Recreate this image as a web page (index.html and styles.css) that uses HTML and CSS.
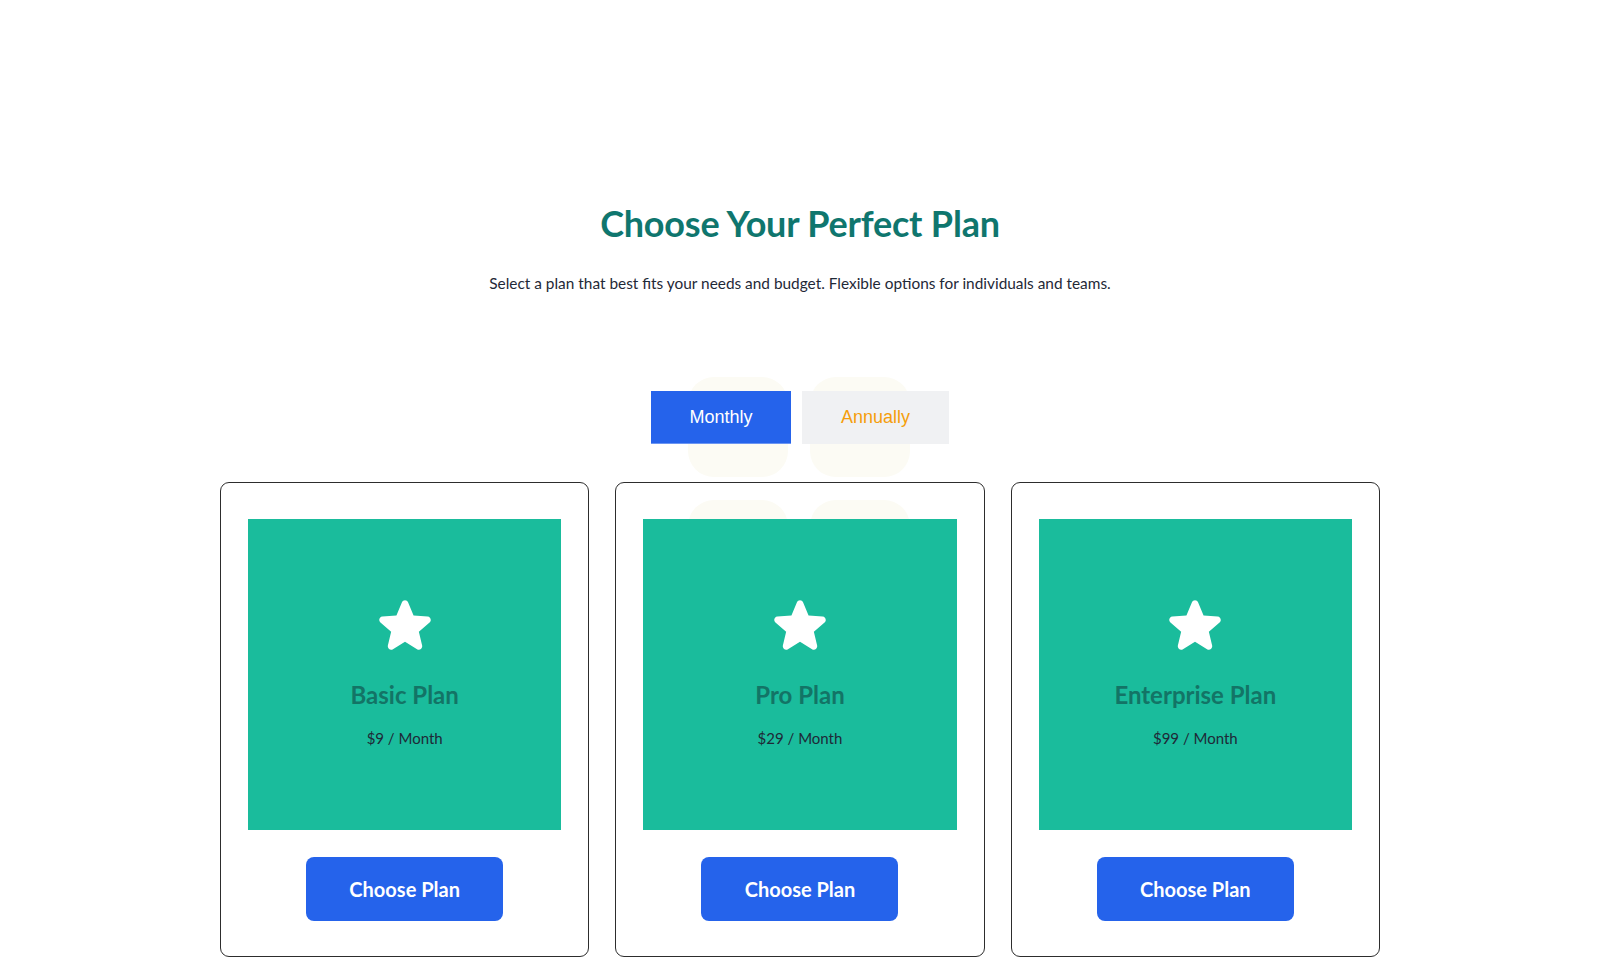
FILE: index.html
```html
<!DOCTYPE html>
<html lang="en">
<head>
<meta charset="utf-8">
<title>Choose Your Perfect Plan</title>
<link rel="stylesheet" href="styles.css">
</head>
<body>
<div class="decor" aria-hidden="true">
  <span class="tile"></span><span class="tile"></span>
  <span class="tile"></span><span class="tile"></span>
</div>
<main class="pricing">
  <header class="intro">
    <h1 class="title">Choose Your Perfect Plan</h1>
    <p class="subtitle">Select a plan that best fits your needs and budget. Flexible options for individuals and teams.</p>
  </header>
  <div class="toggle">
    <button class="toggle-btn is-active">Monthly</button>
    <button class="toggle-btn">Annually</button>
  </div>
  <section class="cards">
    <article class="card">
      <div class="panel">
        <svg class="star" viewBox="2 2.3 20 19.2" width="52" height="50"><path fill="#fff" d="M10.788 3.21c.448-1.077 1.976-1.077 2.424 0l2.082 5.007 5.404.433c1.164.093 1.636 1.545.749 2.305l-4.117 3.527 1.257 5.273c.271 1.136-.964 2.033-1.96 1.425L12 18.354 7.373 21.18c-.996.608-2.231-.29-1.96-1.425l1.257-5.273-4.117-3.527c-.887-.76-.415-2.212.749-2.305l5.404-.433 2.082-5.006z"/></svg>
        <h2 class="plan-name">Basic Plan</h2>
        <p class="plan-price">$9 / Month</p>
      </div>
      <button class="choose">Choose Plan</button>
    </article>
    <article class="card">
      <div class="panel">
        <svg class="star" viewBox="2 2.3 20 19.2" width="52" height="50"><path fill="#fff" d="M10.788 3.21c.448-1.077 1.976-1.077 2.424 0l2.082 5.007 5.404.433c1.164.093 1.636 1.545.749 2.305l-4.117 3.527 1.257 5.273c.271 1.136-.964 2.033-1.96 1.425L12 18.354 7.373 21.18c-.996.608-2.231-.29-1.96-1.425l1.257-5.273-4.117-3.527c-.887-.76-.415-2.212.749-2.305l5.404-.433 2.082-5.006z"/></svg>
        <h2 class="plan-name">Pro Plan</h2>
        <p class="plan-price">$29 / Month</p>
      </div>
      <button class="choose">Choose Plan</button>
    </article>
    <article class="card">
      <div class="panel">
        <svg class="star" viewBox="2 2.3 20 19.2" width="52" height="50"><path fill="#fff" d="M10.788 3.21c.448-1.077 1.976-1.077 2.424 0l2.082 5.007 5.404.433c1.164.093 1.636 1.545.749 2.305l-4.117 3.527 1.257 5.273c.271 1.136-.964 2.033-1.96 1.425L12 18.354 7.373 21.18c-.996.608-2.231-.29-1.96-1.425l1.257-5.273-4.117-3.527c-.887-.76-.415-2.212.749-2.305l5.404-.433 2.082-5.006z"/></svg>
        <h2 class="plan-name">Enterprise Plan</h2>
        <p class="plan-price">$99 / Month</p>
      </div>
      <button class="choose">Choose Plan</button>
    </article>
  </section>
</main>
</body>
</html>
```
FILE: styles.css
```css
* { box-sizing: border-box; }

html, body {
  margin: 0;
  padding: 0;
  background: #ffffff;
}

body {
  font-family: Lato, "Noto Sans", "Liberation Sans", sans-serif;
  color: #1f2937;
  position: relative;
  min-height: 978px;
}

.decor {
  position: absolute;
  left: 688px;
  top: 377px;
  display: grid;
  grid-template-columns: 100px 100px;
  grid-auto-rows: 100px;
  gap: 23px 22px;
  z-index: 0;
}

.tile {
  background: #fcfbf4;
  border-radius: 26px;
}

.pricing {
  position: relative;
  z-index: 1;
  padding-top: 201px;
  display: flex;
  flex-direction: column;
  align-items: center;
}

.intro {
  text-align: center;
}

.title {
  margin: 0;
  font-size: 36px;
  line-height: 44px;
  font-weight: 700;
  color: #0f766e;
  letter-spacing: -0.2px;
}

.subtitle {
  margin: 26px 0 0;
  font-size: 15.4px;
  line-height: 24px;
  color: #1f2937;
}

.toggle {
  margin-top: 96px;
  display: flex;
  gap: 11px;
}

.toggle-btn {
  height: 53px;
  border: none;
  font-family: "Liberation Sans", Arial, sans-serif;
  font-size: 18px;
  background: #f0f1f3;
  color: #f59e0b;
  padding: 0;
  width: 147px;
  cursor: pointer;
}

.toggle-btn.is-active {
  width: 140px;
  background: #2563eb;
  color: #ffffff;
  border-bottom: 1px solid #6b95f2;
}

.cards {
  margin-top: 38px;
  width: 1160px;
  display: grid;
  grid-template-columns: repeat(3, 1fr);
  gap: 26px;
}

.card {
  border: 1px solid #2d2d2d;
  border-radius: 9px;
  padding: 36px 27px 35px;
  display: flex;
  flex-direction: column;
  align-items: center;
}

.panel {
  width: 100%;
  height: 311px;
  background: #1abc9c;
  display: flex;
  flex-direction: column;
  align-items: center;
  justify-content: center;
  padding-bottom: 2px;
}

.star {
  display: block;
}

.plan-name {
  margin: 29px 0 0;
  font-size: 24px;
  line-height: 32px;
  font-weight: 700;
  color: #137466;
}

.plan-price {
  margin: 17px 0 0;
  font-size: 15px;
  line-height: 20px;
  color: #1f2937;
}

.choose {
  margin-top: 27px;
  width: 197px;
  height: 64px;
  border: none;
  border-radius: 8px;
  background: #2563eb;
  color: #ffffff;
  font-family: Lato, "Noto Sans", sans-serif;
  font-size: 20px;
  font-weight: 700;
  cursor: pointer;
}
```
